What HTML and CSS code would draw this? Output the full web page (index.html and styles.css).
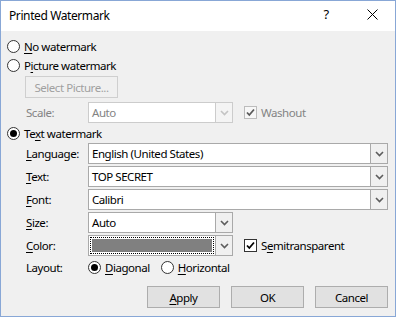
FILE: index.html
```html
<!DOCTYPE html>
<html>
<head>
<meta charset="utf-8">
<link rel="stylesheet" href="styles.css">
</head>
<body>
<div class="window">
  <div class="titlebar">
    <span class="title">Printed Watermark</span>
    <span class="tb-help">?</span>
    <span class="tb-close">
      <svg width="11" height="11" viewBox="0 0 11 11"><path d="M0.5 0.5 L10.5 10.5 M10.5 0.5 L0.5 10.5" stroke="#000" stroke-width="1" fill="none"/></svg>
    </span>
  </div>
  <div class="content">
    <label class="rrow r-no"><span class="radio"></span><span><u>N</u>o watermark</span></label>
    <label class="rrow r-pic"><span class="radio"></span><span>P<u>i</u>cture watermark</span></label>
    <div class="btn btn-disabled btn-select">Select Picture...</div>
    <div class="frow f-scale">
      <span class="flabel disabled">Scale:</span>
      <div class="combo combo-s combo-disabled">
        <span class="cfield">Auto</span>
        <span class="cbtn"><svg width="9" height="6" viewBox="0 0 9 6"><path d="M1 1 L4.5 4.5 L8 1" stroke="#c4c4c4" stroke-width="1.6" fill="none"/></svg></span>
      </div>
      <label class="check-wrap disabled"><span class="check check-dis"><svg width="11" height="11" viewBox="0 0 11 11"><path d="M2 5.5 L4.3 8 L9 2.5" stroke="#5a5a5a" stroke-width="1.8" fill="none"/></svg></span><span>Washout</span></label>
    </div>
    <label class="rrow r-text"><span class="radio checked"></span><span>Te<u>x</u>t watermark</span></label>
    <div class="frow f-first">
      <span class="flabel"><u>L</u>anguage:</span>
      <div class="combo combo-l">
        <span class="cfield">English (United States)</span>
        <span class="cbtn"><svg width="9" height="6" viewBox="0 0 9 6"><path d="M1 1 L4.5 4.5 L8 1" stroke="#5d5d5d" stroke-width="1.6" fill="none"/></svg></span>
      </div>
    </div>
    <div class="frow">
      <span class="flabel"><u>T</u>ext:</span>
      <div class="combo combo-l">
        <span class="cfield">TOP SECRET</span>
        <span class="cbtn"><svg width="9" height="6" viewBox="0 0 9 6"><path d="M1 1 L4.5 4.5 L8 1" stroke="#5d5d5d" stroke-width="1.6" fill="none"/></svg></span>
      </div>
    </div>
    <div class="frow">
      <span class="flabel"><u>F</u>ont:</span>
      <div class="combo combo-l">
        <span class="cfield">Calibri</span>
        <span class="cbtn"><svg width="9" height="6" viewBox="0 0 9 6"><path d="M1 1 L4.5 4.5 L8 1" stroke="#5d5d5d" stroke-width="1.6" fill="none"/></svg></span>
      </div>
    </div>
    <div class="frow">
      <span class="flabel"><u>S</u>ize:</span>
      <div class="combo combo-s">
        <span class="cfield">Auto</span>
        <span class="cbtn"><svg width="9" height="6" viewBox="0 0 9 6"><path d="M1 1 L4.5 4.5 L8 1" stroke="#5d5d5d" stroke-width="1.6" fill="none"/></svg></span>
      </div>
    </div>
    <div class="frow">
      <span class="flabel"><u>C</u>olor:</span>
      <div class="combo combo-s">
        <span class="cfield cfield-color"><span class="focusrect"><span class="swatch"></span></span></span>
        <span class="cbtn"><svg width="9" height="6" viewBox="0 0 9 6"><path d="M1 1 L4.5 4.5 L8 1" stroke="#5d5d5d" stroke-width="1.6" fill="none"/></svg></span>
      </div>
      <label class="check-wrap"><span class="check"><svg width="11" height="11" viewBox="0 0 11 11"><path d="M2 5.5 L4.3 8 L9 2.5" stroke="#000" stroke-width="1.8" fill="none"/></svg></span><span>S<u>e</u>mitransparent</span></label>
    </div>
    <div class="frow f-layout">
      <span class="flabel">Layout:</span>
      <label class="ropt"><span class="radio checked"></span><span><u>D</u>iagonal</span></label>
      <label class="ropt"><span class="radio"></span><span><u>H</u>orizontal</span></label>
    </div>
    <div class="buttons">
      <div class="btn"><u>A</u>pply</div>
      <div class="btn">OK</div>
      <div class="btn">Cancel</div>
    </div>
  </div>
</div>
</body>
</html>
```

FILE: styles.css
```css
* { box-sizing: border-box; }
html, body { margin: 0; padding: 0; background: #fff; }
body {
  font-family: "Noto Sans", "Open Sans", sans-serif;
  font-size: 11.5px;
  letter-spacing: -0.45px;
  color: #000;
}
u { text-decoration: underline; text-underline-offset: 2px; text-decoration-thickness: 1px; }
.window {
  width: 396px;
  height: 317px;
  border: 1px solid #88a7d6;
  background: #f0f0f0;
  display: flex;
  flex-direction: column;
}
.titlebar {
  height: 30px;
  background: #fff;
  display: flex;
  align-items: center;
  padding-left: 8px;
  flex: none;
}
.title { flex: 1; font-size: 12px; letter-spacing: -0.4px; margin-top: -1px; }
.tb-help { font-size: 13px; width: 46px; text-align: center; margin-top: -4px; margin-right: 0; }
.tb-close { width: 46px; display: flex; justify-content: center; margin-right: 0; margin-top: -4px; }
.content {
  display: flex;
  flex-direction: column;
  padding-left: 6px;
  padding-right: 6px;
}
.rrow { display: flex; align-items: center; height: 18px; }
.r-no { margin-top: 6px; }
.r-pic { margin-top: 1px; }
.r-text { margin-top: 1px; }
.radio {
  width: 13px; height: 13px;
  border: 1px solid #333;
  border-radius: 50%;
  background: #fff;
  margin-right: 4px;
  flex: none;
  display: flex; align-items: center; justify-content: center;
}
.radio.checked::after {
  content: "";
  width: 7px; height: 7px;
  border-radius: 50%;
  background: #000;
}
.btn {
  height: 22px;
  width: 73px;
  border: 1px solid #adadad;
  background: #e1e1e1;
  display: flex; align-items: center; justify-content: center;
}
.btn-select {
  margin-top: 2px;
  margin-left: 18px;
  width: 93px;
}
.btn-disabled { background: #f0f0f0; border-color: #cfcfcf; color: #a0a0a0; }
.frow {
  display: flex;
  align-items: center;
  height: 21px;
  margin-top: 2px;
  margin-left: 19px;
}
.f-scale { margin-top: 4px; }
.f-first { margin-top: 1px; }
.flabel { width: 62px; flex: none; }
.disabled { color: #838383; }
.combo {
  height: 21px;
  border: 1px solid #a9a9a9;
  background: #fff;
  display: flex;
}
.combo-s { width: 145px; }
.combo-l { width: 300px; }
.cfield { flex: 1; display: flex; align-items: center; padding-left: 3px; }
.cbtn {
  width: 17px;
  border-left: 1px solid #a9a9a9;
  background: #f0f0f0;
  display: flex; align-items: center; justify-content: center;
}
.combo-disabled { border-color: #cccccc; }
.combo-disabled .cfield { color: #838383; }
.combo-disabled .cbtn { border-left-color: #cccccc; background: #f4f4f4; }
.cfield-color { padding: 1px; }
.focusrect {
  flex: 1; align-self: stretch;
  border: 1px dotted #000;
  padding: 1px;
  display: flex;
}
.swatch { flex: 1; background: #808080; }
.check-wrap { display: flex; align-items: center; margin-left: 11px; }
.check {
  width: 13px; height: 13px;
  border: 1px solid #333;
  background: #fff;
  margin-right: 4px;
  display: flex; align-items: center; justify-content: center;
}
.check-dis { border-color: #bcbcbc; background: #f7f7f7; }
.f-layout { height: 18px; }
.ropt { display: flex; align-items: center; margin-right: 11px; }
.buttons {
  display: flex;
  justify-content: flex-end;
  gap: 11px;
  margin-top: 10px;
  padding-right: 1px;
}
```
